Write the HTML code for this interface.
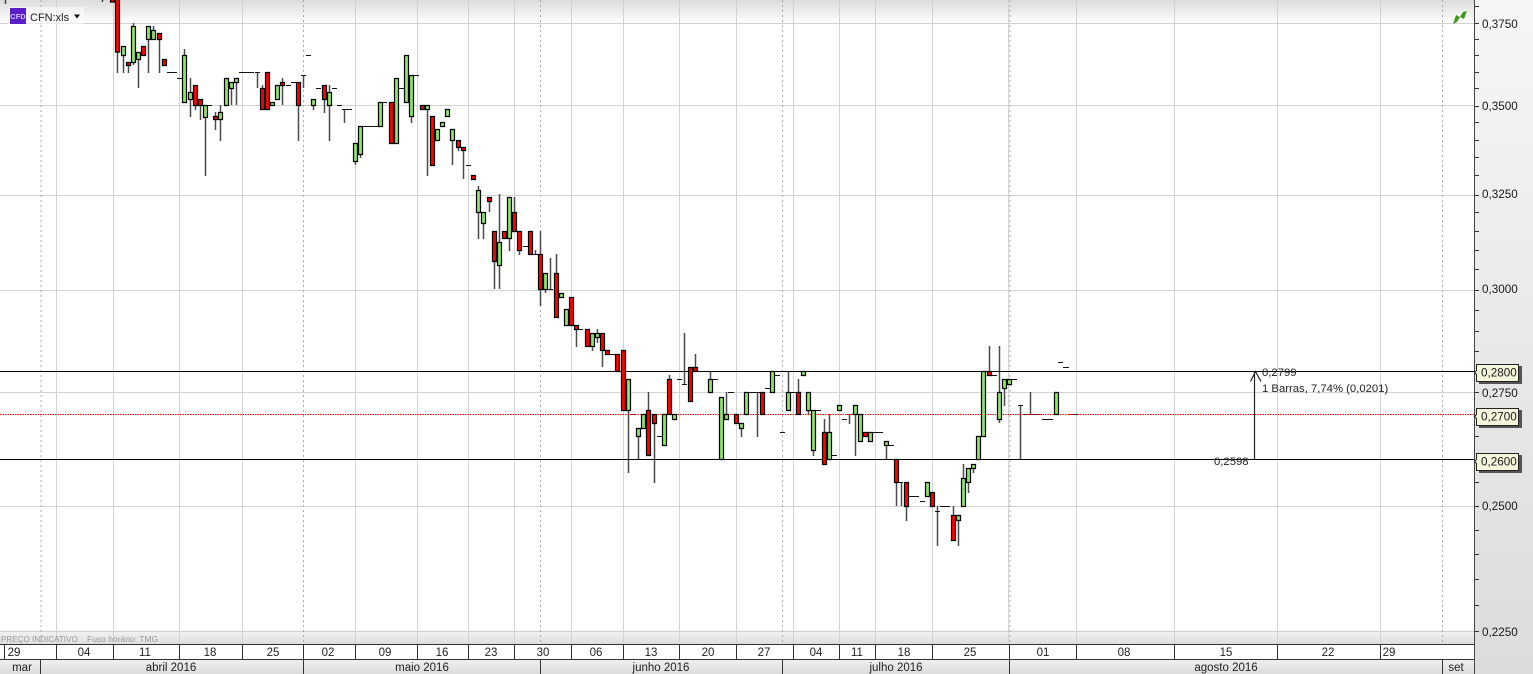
<!DOCTYPE html>
<html><head><meta charset="utf-8">
<style>
html,body{margin:0;padding:0;background:#fff}
body{width:1533px;height:674px;overflow:hidden;position:relative;font-family:"Liberation Sans",sans-serif}
svg{position:absolute;left:0;top:0}
text{font-family:"Liberation Sans",sans-serif}
.a text{font-size:11.7px;fill:#1a1a1a}
.d text{font-size:11.5px;fill:#222;text-anchor:middle}
</style></head><body>
<svg width="1533" height="674" viewBox="0 0 1533 674">
<defs>
<linearGradient id="t" x1="0" y1="0" x2="0" y2="1"><stop offset="0" stop-color="#dcdcdc"/><stop offset="1" stop-color="#fff"/></linearGradient>
<linearGradient id="b" x1="0" y1="0" x2="0" y2="1"><stop offset="0" stop-color="#f4f4f4"/><stop offset="1" stop-color="#dedede"/></linearGradient>
<linearGradient id="ax" x1="0" y1="0" x2="0" y2="1"><stop offset="0" stop-color="#f6f6f6"/><stop offset="1" stop-color="#dcdcdc"/></linearGradient>
<linearGradient id="m" x1="0" y1="0" x2="0" y2="1"><stop offset="0" stop-color="#f0f0f0"/><stop offset="1" stop-color="#dcdcdc"/></linearGradient>
</defs>
<rect width="1533" height="674" fill="#fff"/>
<rect width="1474" height="24" fill="url(#t)"/>
<rect y="630" width="1474" height="14" fill="url(#b)"/>
<!-- grid -->
<path fill="none" stroke="#d2d2d2" d="M0 23.5H1474M0 105.5H1474M0 195.5H1474M0 290.5H1474M0 392.5H1474M0 506.5H1474M0 631.5H1474M56.5 0V644M113.5 0V644M179.5 0V644M242.5 0V644M355.5 0V644M417.5 0V644M468.5 0V644M514.5 0V644M571.5 0V644M623.5 0V644M679.5 0V644M736.5 0V644M793.5 0V644M839.5 0V644M875.5 0V644M932.5 0V644M1076.5 0V644M1174.5 0V644M1277.5 0V644M1380.5 0V644M1008.5 0V644"/>
<path fill="none" stroke="#aaa" stroke-dasharray="2 3" d="M41 0V644M303.500 0V644M540.500 0V644M782.500 0V644M1010 0V644M1442.500 0V644"/>
<!-- top-left chip background -->
<rect x="8" y="7" width="76" height="17" fill="#fafafa" opacity=".6"/>
<rect x="10" y="8" width="16" height="16" fill="#5b1fc9"/>
<text x="18" y="19" font-size="7.500" font-weight="bold" text-anchor="middle" fill="#cfc4ff">CFD</text>
<text x="30" y="21" font-size="11" fill="#222">CFN:xls</text>
<path d="M74 14.500h6l-3 4z" fill="#111"/>
<!-- green arrow -->
<path d="M1453 24l3-9 4 2 3-5 4-1-3 8-4-2-3 5z" fill="#3f9a1c"/>
<!-- wicks -->
<path fill="none" stroke="#4a4a4a" stroke-width="1.500" d="M5.500 0V4M102.500 0V2M117.500 52V73M123.500 55V73M128.500 65V73M133.500 23V65M138.500 59V88M148.500 39V73M153.500 26V30M159.500 39V73M184.500 49V55M190.500 78V117M195.500 105V110M200.500 105V120M205.500 117V176M215.500 112V130M220.500 105V141M231.500 88V105M236.500 82V105M257.500 72V88M262.500 85V88M282.500 78V105M298.500 105V141M303.500 75V88M313.500 105V110M324.500 99V113M329.500 85V141M344.500 109V123M355.500 161V165M360.500 154V158M411.500 116V123M427.500 109V176M452.500 140V165M458.500 147V151M463.500 150V179M478.500 186V239M483.500 223V239M489.500 201V212M494.500 261V289M499.500 194V289M509.500 238V251M514.500 197V212M519.500 250V255M535.500 250V254M540.500 231V306M545.500 289V293M550.500 258V289M556.500 254V273M576.500 329V347M592.500 346V351M597.500 329V343M602.500 350V367M628.500 410V473M638.500 436V459M648.500 392V410M654.500 423V483M669.500 375V379M684.500 333V384M695.500 354V367M710.500 371V379M726.500 392V414M741.500 428V437M757.500 392V437M788.500 371V392M798.500 379V392M808.500 410V414M813.500 450V456M824.500 419V432M829.500 414V432M849.500 414V424M855.500 414V456M886.500 445V459M896.500 482V506M901.500 482V506M906.500 506V521M937.500 506V546M953.500 506V515M958.500 520V546M963.500 464V478M968.500 482V493M973.500 468V473M989.500 346V371M999.500 346V423M1004.500 388V406M1020.500 405V459M1030.500 392V414"/>
<!-- dashes -->
<path fill="none" stroke="#111" d="M167 72.500H177M177 78.500H182M207 105.500H212M239 72.500H254M255 72.500H260M286 85.500H291M291 82.500H301M301 75.500H306M306 55.500H311M316 88.500H321M332 88.500H337M337 105.500H342M342 109.500H352M362 126.500H378M382 102.500H387M398 88.500H404M413 75.500H419M466 165.500H471M523 246.500H528M532 254.500H538M547 289.500H553M578 329.500H583M609 354.500H615M631 414.500H635M657 436.500H662M677 379.500H682M682 384.500H687M712 379.500H718M728 392.500H734M748 392.500H753M752 392.500H760M765 388.500H770M775 375.500H780M780 432.500H785M790 392.500H796M810 410.500H821M831 455.500H837M842 419.500H847M847 414.500H853M872 432.500H883M888 445.500H894M898 482.500H903M908 496.500H919M920 501.500H925M935 511.500H940M940 506.500H950M992 375.500H997M1012 379.500H1017M1018 405.500H1023M1023 414.500H1042M1042 419.500H1053M1058 362.500H1063M1063 367.500H1069M1069 414.500H1078"/>
<!-- horizontal levels -->
<path fill="none" stroke="#000" d="M0 371.500H1474M0 459.500H1474"/>
<path fill="none" stroke="#f00" stroke-dasharray="1.500 1" d="M0 414.500H1474"/>
<!-- red bodies -->
<path fill="#f00" stroke="#000" stroke-width="1.200" d="M110.500 -1h4v3h-4zM115.500 -1h4v53h-4zM126.500 62.500h4v3h-4zM141.500 46.500h4v9h-4zM157.500 33.500h4v6h-4zM162.500 59.500h4v6h-4zM193.500 85.500h4v20h-4zM198.500 99.500h4v6h-4zM213.500 116.500h4v3h-4zM260.500 88.500h4v21h-4zM265.500 72.500h4v37h-4zM280.500 82.500h4v3h-4zM296.500 82.500h4v23h-4zM322.500 85.500h4v14h-4zM389.500 102.500h4v41h-4zM420.500 105.500h4v4h-4zM430.500 116.500h4v49h-4zM456.500 140.500h4v7h-4zM461.500 147.500h4v3h-4zM471.500 175.500h4v4h-4zM487.500 197.500h4v4h-4zM492.500 231.500h4v30h-4zM502.500 231.500h4v7h-4zM512.500 212.500h4v19h-4zM517.500 231.500h4v19h-4zM528.500 231.500h4v23h-4zM538.500 254.500h4v35h-4zM554.500 273.500h4v44h-4zM569.500 297.500h4v28h-4zM574.500 325.500h4v4h-4zM585.500 329.500h4v17h-4zM600.500 333.500h4v17h-4zM605.500 350.500h4v4h-4zM615.500 354.500h4v17h-4zM621.500 350.500h4v60h-4zM646.500 410.500h4v45h-4zM652.500 414.500h4v9h-4zM667.500 379.500h4v35h-4zM688.500 367.500h4v34h-4zM693.500 367.500h4v4h-4zM734.500 414.500h4v9h-4zM760.500 392.500h4v22h-4zM796.500 392.500h4v22h-4zM822.500 432.500h4v32h-4zM863.500 432.500h4v4h-4zM894.500 459.500h4v23h-4zM904.500 482.500h4v24h-4zM930.500 492.500h4v14h-4zM951.500 515.500h4v25h-4zM987.500 371.500h4v4h-4z"/>
<!-- green bodies -->
<path fill="#8fe366" stroke="#000" stroke-width="1.200" d="M121.500 46.500h4v9h-4zM131.500 26.500h4v36h-4zM136.500 52.500h4v7h-4zM146.500 26.500h4v13h-4zM151.500 30.500h4v9h-4zM182.500 55.500h4v47h-4zM188.500 92.500h4v7h-4zM203.500 105.500h4v12h-4zM218.500 112.500h4v7h-4zM224.500 78.500h4v27h-4zM229.500 82.500h4v6h-4zM234.500 78.500h4v4h-4zM270.500 102.500h4v3h-4zM275.500 85.500h4v14h-4zM311.500 99.500h4v6h-4zM327.500 92.500h4v13h-4zM353.500 143.500h4v18h-4zM358.500 126.500h4v28h-4zM378.500 102.500h4v24h-4zM394.500 78.500h4v65h-4zM404.500 55.500h4v47h-4zM409.500 75.500h4v41h-4zM425.500 105.500h4v4h-4zM435.500 129.500h4v11h-4zM440.500 122.500h4v4h-4zM445.500 109.500h4v7h-4zM450.500 129.500h4v11h-4zM476.500 190.500h4v22h-4zM481.500 212.500h4v11h-4zM497.500 242.500h4v23h-4zM507.500 197.500h4v41h-4zM543.500 273.500h4v16h-4zM559.500 293.500h4v4h-4zM564.500 309.500h4v16h-4zM590.500 333.500h4v13h-4zM595.500 333.500h4v4h-4zM626.500 379.500h4v31h-4zM636.500 428.500h4v8h-4zM641.500 414.500h4v14h-4zM662.500 414.500h4v31h-4zM672.500 414.500h4v5h-4zM708.500 379.500h4v13h-4zM719.500 397.500h4v62h-4zM724.500 414.500h4v5h-4zM739.500 423.500h4v5h-4zM744.500 392.500h4v22h-4zM770.500 371.500h4v21h-4zM786.500 392.500h4v18h-4zM801.500 371.500h4v4h-4zM806.500 392.500h4v18h-4zM811.500 410.500h4v40h-4zM827.500 432.500h4v27h-4zM837.500 405.500h4v5h-4zM853.500 405.500h4v9h-4zM858.500 414.500h4v27h-4zM868.500 432.500h4v9h-4zM884.500 441.500h4v4h-4zM925.500 482.500h4v14h-4zM956.500 515.500h4v5h-4zM961.500 478.500h4v28h-4zM966.500 468.500h4v14h-4zM971.500 464.500h4v4h-4zM976.500 436.500h4v23h-4zM981.500 371.500h4v65h-4zM997.500 392.500h4v27h-4zM1002.500 379.500h4v9h-4zM1007.500 379.500h4v5h-4zM1054.500 392.500h4v22h-4z"/>
<!-- measure arrow -->
<path fill="none" stroke="#222" stroke-width="1.200" d="M1254.500 459V372M1250.500 381.500L1255.500 371.500L1261 381.500"/>
<g font-size="11.300" fill="#222">
<text x="1262" y="376">0,2799</text>
<text x="1262" y="392">1 Barras, 7,74% (0,0201)</text>
<text x="1214" y="465">0,2598</text>
</g>
<!-- right axis -->
<rect x="1475" y="0" width="58" height="674" fill="url(#ax)"/>
<path stroke="#444" d="M1474.500 0V674"/>
<path fill="none" stroke="#333" d="M1475 6.500h4M1475 23.500h4M1475 39.500h4M1475 55.500h4M1475 72.500h4M1475 88.500h4M1475 106.500h4M1475 122.500h4M1475 140.500h4M1475 157.500h4M1475 175.500h4M1475 195.500h4M1475 212.500h4M1475 231.500h4M1475 250.500h4M1475 269.500h4M1475 290.500h4M1475 310.500h4M1475 331.500h4M1475 351.500h4M1475 392.500h4M1475 436.500h4M1475 482.500h4M1475 506.500h4M1475 530.500h4M1475 554.500h4M1475 579.500h4M1475 605.500h4M1475 631.500h4"/>
<g class="a">
<text x="1482" y="28">0,3750</text>
<text x="1482" y="110">0,3500</text>
<text x="1482" y="198">0,3250</text>
<text x="1482" y="293">0,3000</text>
<text x="1482" y="397">0,2750</text>
<text x="1482" y="510">0,2500</text>
<text x="1482" y="636">0,2250</text>
</g>
<!-- price tags -->
<g>
<rect x="1479" y="366" width="43" height="18" fill="#555"/>
<rect x="1479" y="410" width="43" height="18" fill="#555"/>
<rect x="1479" y="455" width="43" height="18" fill="#555"/>
<g fill="#f5f5dc" stroke="#222">
<path d="M1476.500 364.500h42v17h-42v-7l-2-2 2-2z"/>
<path d="M1476.500 408.500h42v17h-42v-7l-2-2 2-2z"/>
<path d="M1476.500 453.500h42v17h-42v-7l-2-2 2-2z"/>
</g>
</g>
<g class="a">
<text x="1481" y="376.500">0,2800</text>
<text x="1481" y="420.500">0,2700</text>
<text x="1481" y="465.500">0,2600</text>
</g>
<!-- date axis -->
<text x="1" y="642" font-size="8.100" fill="#999">PREÇO INDICATIVO</text>
<text x="87" y="642" font-size="8.500" fill="#999">Fuso horário: TMG</text>
<rect y="644" width="1474" height="15" fill="#fff"/>
<rect y="659" width="1474" height="15" fill="url(#m)"/>
<path fill="none" stroke="#333" d="M0 644.500H1474M0 659.500H1474M4.500 644V659M56.500 644V659M113.500 644V659M179.500 644V659M242.500 644V659M303.500 644V659M355.500 644V659M417.500 644V659M468.500 644V659M514.500 644V659M571.500 644V659M623.500 644V659M679.500 644V659M736.500 644V659M793.500 644V659M839.500 644V659M875.500 644V659M932.500 644V659M1009.500 644V659M1076.500 644V659M1174.500 644V659M1277.500 644V659M1380.500 644V659M40.500 659V674M303.500 659V674M540.500 659V674M782.500 659V674M1009.500 659V674M1442.500 659V674"/>
<g class="d">
<text x="14" y="656">29</text><text x="84" y="656">04</text><text x="145" y="656">11</text><text x="210" y="656">18</text><text x="273" y="656">25</text><text x="328" y="656">02</text><text x="385" y="656">09</text><text x="442" y="656">16</text><text x="491" y="656">23</text><text x="543" y="656">30</text><text x="596" y="656">06</text><text x="651" y="656">13</text><text x="708" y="656">20</text><text x="764" y="656">27</text><text x="816" y="656">04</text><text x="857" y="656">11</text><text x="904" y="656">18</text><text x="970" y="656">25</text><text x="1043" y="656">01</text><text x="1124" y="656">08</text><text x="1226" y="656">15</text><text x="1328" y="656">22</text><text x="1389" y="656">29</text>
<text x="22" y="671">mar</text><text x="171" y="671">abril 2016</text><text x="422" y="671">maio 2016</text><text x="661" y="671">junho 2016</text><text x="896" y="671">julho 2016</text><text x="1226" y="671">agosto 2016</text><text x="1456" y="671">set</text>
</g>
</svg>
</body></html>
